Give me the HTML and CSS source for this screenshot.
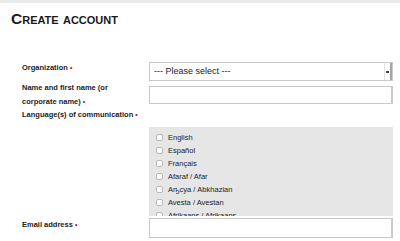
FILE: index.html
```html
<!DOCTYPE html>
<html lang="en">
<head>
  <meta charset="UTF-8" />
  <title>Create account</title>
  <link rel="stylesheet" href="styles.css">
</head>
<body>
  <div class="top-bar"></div>
  <div class="page">
    <h1 class="title">Create account</h1>

    <form class="form">
      <label class="label org">Organization <span class="req">&bull;</span></label>
      <div class="select-box">
        <span class="select-text">--- Please select ---</span>
        <span class="select-arrow"><span class="caret"></span></span>
      </div>

      <label class="label name">Name and first name (or corporate name) <span class="req">&bull;</span></label>
      <input class="text-input" type="text" />

      <label class="label wide">Language(s) of communication <span class="req">&bull;</span></label>

      <div class="lang-box">
        <div class="lang-item"><span class="check"></span>English</div>
        <div class="lang-item"><span class="check"></span>Español</div>
        <div class="lang-item"><span class="check"></span>Français</div>
        <div class="lang-item"><span class="check"></span>Afaraf / Afar</div>
        <div class="lang-item"><span class="check"></span>Aҧсуа / Abkhazian</div>
        <div class="lang-item"><span class="check"></span>Avesta / Avestan</div>
        <div class="lang-item"><span class="check"></span>Afrikaans / Afrikaans</div>
        <div class="lang-item"><span class="check"></span>Akan / Akan</div>
      </div>

      <label class="label email">Email address <span class="req">&bull;</span></label>
      <input class="text-input email-input" type="text" />
    </form>
  </div>
</body>
</html>
```

FILE: styles.css
```css
* {
  box-sizing: border-box;
}

body {
  margin: 0;
  font-family: "Liberation Sans", Arial, sans-serif;
  color: #222;
  background-color: #fff;
}

.top-bar {
  height: 3px;
  background-color: #e9e9e9;
}

.page {
  padding: 0 0 0 11px;
}

.title {
  margin: 6px 0 0 0;
  font-size: 15.5px;
  font-variant: small-caps;
  font-weight: bold;
  line-height: 20px;
  color: #1a1a1a;
}

.form {
  display: grid;
  grid-template-columns: 127px 244px;
  row-gap: 5px;
  padding-left: 11px;
  margin-top: 33px;
}

.label {
  font-size: 7.5px;
  font-weight: bold;
  line-height: 14px;
  padding-right: 14px;
  align-self: start;
}

.label.org {
  margin-top: -1px;
}

.label.name {
  margin-top: -5px;
}

.label.wide {
  grid-column: 1 / 3;
  margin-top: -6px;
}

.req {
  color: #d0021b;
  font-size: 7px;
}

.select-box {
  display: flex;
  height: 19px;
  border: 1px solid #c9c9c9;
  background-color: #fff;
  font-size: 9px;
}

.select-text {
  flex: 1;
  padding: 0 4px;
  line-height: 17px;
}

.select-arrow {
  width: 8px;
  border-left: 1px solid #e2e2e2;
  border-right: 2px solid #a5a5a5;
  display: flex;
  align-items: center;
  justify-content: center;
}

.caret {
  width: 3px;
  height: 2px;
  background-color: #444;
}

.text-input {
  height: 18px;
  width: 100%;
  border: 1px solid #c9c9c9;
  border-right-width: 2px;
  margin: 0;
  padding: 0 4px;
  background-color: #fff;
  outline: none;
}

.email-input {
  height: 20px;
}

.lang-box {
  grid-column: 2;
  height: 89px;
  overflow: hidden;
  background-color: #e6e6e6;
  padding: 4px 0 0 7px;
  margin-bottom: -3px;
}

.lang-item {
  display: flex;
  align-items: center;
  height: 13px;
  font-size: 7.5px;
  color: #222;
}

.check {
  width: 7px;
  height: 7px;
  border: 1px solid #b8b8b8;
  border-radius: 2px;
  background-color: #fff;
  margin-right: 5px;
}
```
